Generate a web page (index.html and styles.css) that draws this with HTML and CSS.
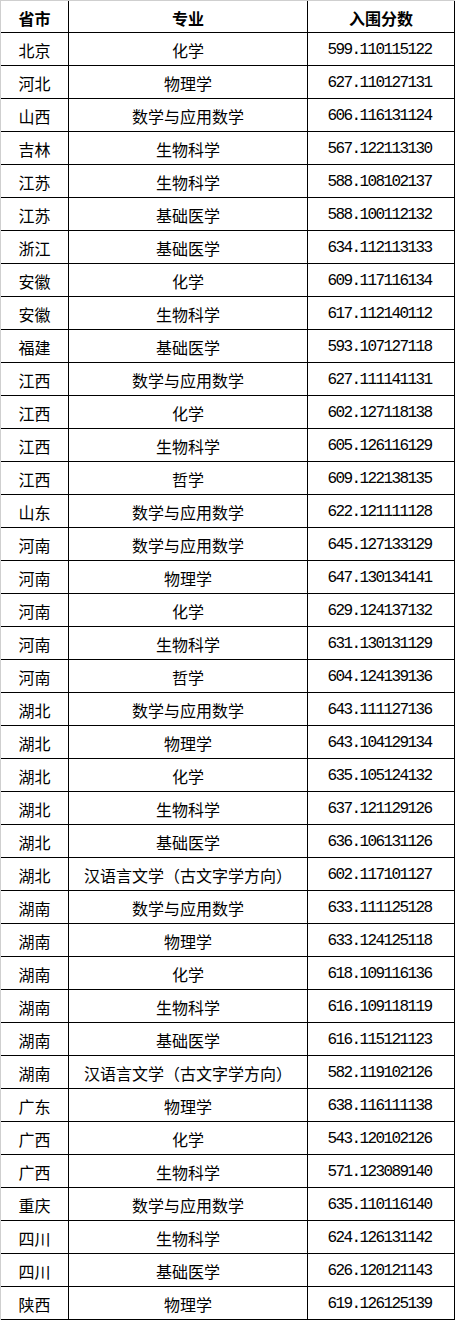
FILE: index.html
```html
<!DOCTYPE html>
<html lang="zh-CN">
<head>
<meta charset="utf-8">
<title>入围分数</title>
<link rel="stylesheet" href="styles.css">
</head>
<body>
<div class="sheet">
  <div class="row head"><div class="c c1">省市</div><div class="c c2">专业</div><div class="c c3">入围分数</div></div>
  <div class="row"><div class="c c1">北京</div><div class="c c2">化学</div><div class="c c3 num">599.110115122</div></div>
  <div class="row"><div class="c c1">河北</div><div class="c c2">物理学</div><div class="c c3 num">627.110127131</div></div>
  <div class="row"><div class="c c1">山西</div><div class="c c2">数学与应用数学</div><div class="c c3 num">606.116131124</div></div>
  <div class="row"><div class="c c1">吉林</div><div class="c c2">生物科学</div><div class="c c3 num">567.122113130</div></div>
  <div class="row"><div class="c c1">江苏</div><div class="c c2">生物科学</div><div class="c c3 num">588.108102137</div></div>
  <div class="row"><div class="c c1">江苏</div><div class="c c2">基础医学</div><div class="c c3 num">588.100112132</div></div>
  <div class="row"><div class="c c1">浙江</div><div class="c c2">基础医学</div><div class="c c3 num">634.112113133</div></div>
  <div class="row"><div class="c c1">安徽</div><div class="c c2">化学</div><div class="c c3 num">609.117116134</div></div>
  <div class="row"><div class="c c1">安徽</div><div class="c c2">生物科学</div><div class="c c3 num">617.112140112</div></div>
  <div class="row"><div class="c c1">福建</div><div class="c c2">基础医学</div><div class="c c3 num">593.107127118</div></div>
  <div class="row"><div class="c c1">江西</div><div class="c c2">数学与应用数学</div><div class="c c3 num">627.111141131</div></div>
  <div class="row"><div class="c c1">江西</div><div class="c c2">化学</div><div class="c c3 num">602.127118138</div></div>
  <div class="row"><div class="c c1">江西</div><div class="c c2">生物科学</div><div class="c c3 num">605.126116129</div></div>
  <div class="row"><div class="c c1">江西</div><div class="c c2">哲学</div><div class="c c3 num">609.122138135</div></div>
  <div class="row"><div class="c c1">山东</div><div class="c c2">数学与应用数学</div><div class="c c3 num">622.121111128</div></div>
  <div class="row"><div class="c c1">河南</div><div class="c c2">数学与应用数学</div><div class="c c3 num">645.127133129</div></div>
  <div class="row"><div class="c c1">河南</div><div class="c c2">物理学</div><div class="c c3 num">647.130134141</div></div>
  <div class="row"><div class="c c1">河南</div><div class="c c2">化学</div><div class="c c3 num">629.124137132</div></div>
  <div class="row"><div class="c c1">河南</div><div class="c c2">生物科学</div><div class="c c3 num">631.130131129</div></div>
  <div class="row"><div class="c c1">河南</div><div class="c c2">哲学</div><div class="c c3 num">604.124139136</div></div>
  <div class="row"><div class="c c1">湖北</div><div class="c c2">数学与应用数学</div><div class="c c3 num">643.111127136</div></div>
  <div class="row"><div class="c c1">湖北</div><div class="c c2">物理学</div><div class="c c3 num">643.104129134</div></div>
  <div class="row"><div class="c c1">湖北</div><div class="c c2">化学</div><div class="c c3 num">635.105124132</div></div>
  <div class="row"><div class="c c1">湖北</div><div class="c c2">生物科学</div><div class="c c3 num">637.121129126</div></div>
  <div class="row"><div class="c c1">湖北</div><div class="c c2">基础医学</div><div class="c c3 num">636.106131126</div></div>
  <div class="row"><div class="c c1">湖北</div><div class="c c2">汉语言文学（古文字学方向）</div><div class="c c3 num">602.117101127</div></div>
  <div class="row"><div class="c c1">湖南</div><div class="c c2">数学与应用数学</div><div class="c c3 num">633.111125128</div></div>
  <div class="row"><div class="c c1">湖南</div><div class="c c2">物理学</div><div class="c c3 num">633.124125118</div></div>
  <div class="row"><div class="c c1">湖南</div><div class="c c2">化学</div><div class="c c3 num">618.109116136</div></div>
  <div class="row"><div class="c c1">湖南</div><div class="c c2">生物科学</div><div class="c c3 num">616.109118119</div></div>
  <div class="row"><div class="c c1">湖南</div><div class="c c2">基础医学</div><div class="c c3 num">616.115121123</div></div>
  <div class="row"><div class="c c1">湖南</div><div class="c c2">汉语言文学（古文字学方向）</div><div class="c c3 num">582.119102126</div></div>
  <div class="row"><div class="c c1">广东</div><div class="c c2">物理学</div><div class="c c3 num">638.116111138</div></div>
  <div class="row"><div class="c c1">广西</div><div class="c c2">化学</div><div class="c c3 num">543.120102126</div></div>
  <div class="row"><div class="c c1">广西</div><div class="c c2">生物科学</div><div class="c c3 num">571.123089140</div></div>
  <div class="row"><div class="c c1">重庆</div><div class="c c2">数学与应用数学</div><div class="c c3 num">635.110116140</div></div>
  <div class="row"><div class="c c1">四川</div><div class="c c2">生物科学</div><div class="c c3 num">624.126131142</div></div>
  <div class="row"><div class="c c1">四川</div><div class="c c2">基础医学</div><div class="c c3 num">626.120121143</div></div>
  <div class="row"><div class="c c1">陕西</div><div class="c c2">物理学</div><div class="c c3 num">619.126125139</div></div>
</div>
</body>
</html>
```
FILE: styles.css
```css
html, body {
  margin: 0;
  padding: 0;
  background: #ffffff;
}

.sheet {
  width: 455px;
  box-sizing: border-box;
  border-left: 1px solid #cfcfcf;
  border-top: 1px solid #cfcfcf;
  display: flex;
  flex-direction: column;
  font-family: "Noto Sans CJK SC", "Noto Sans", sans-serif;
  font-size: 16px;
  color: #000000;
}

.row {
  display: grid;
  grid-template-columns: 68px 239px 147px;
  height: 33px;
}

.head {
  height: 32px;
}

.c {
  box-sizing: border-box;
  border-right: 1px solid #000000;
  border-bottom: 1px solid #000000;
  display: flex;
  align-items: center;
  justify-content: center;
  padding-top: 2px;
  line-height: 1;
  white-space: nowrap;
}

.head .c {
  font-weight: bold;
}

.num {
  font-family: "Liberation Mono", "DejaVu Sans Mono", monospace;
  font-size: 16px;
  letter-spacing: -1.6px;
  padding-right: 3px;
}
```
